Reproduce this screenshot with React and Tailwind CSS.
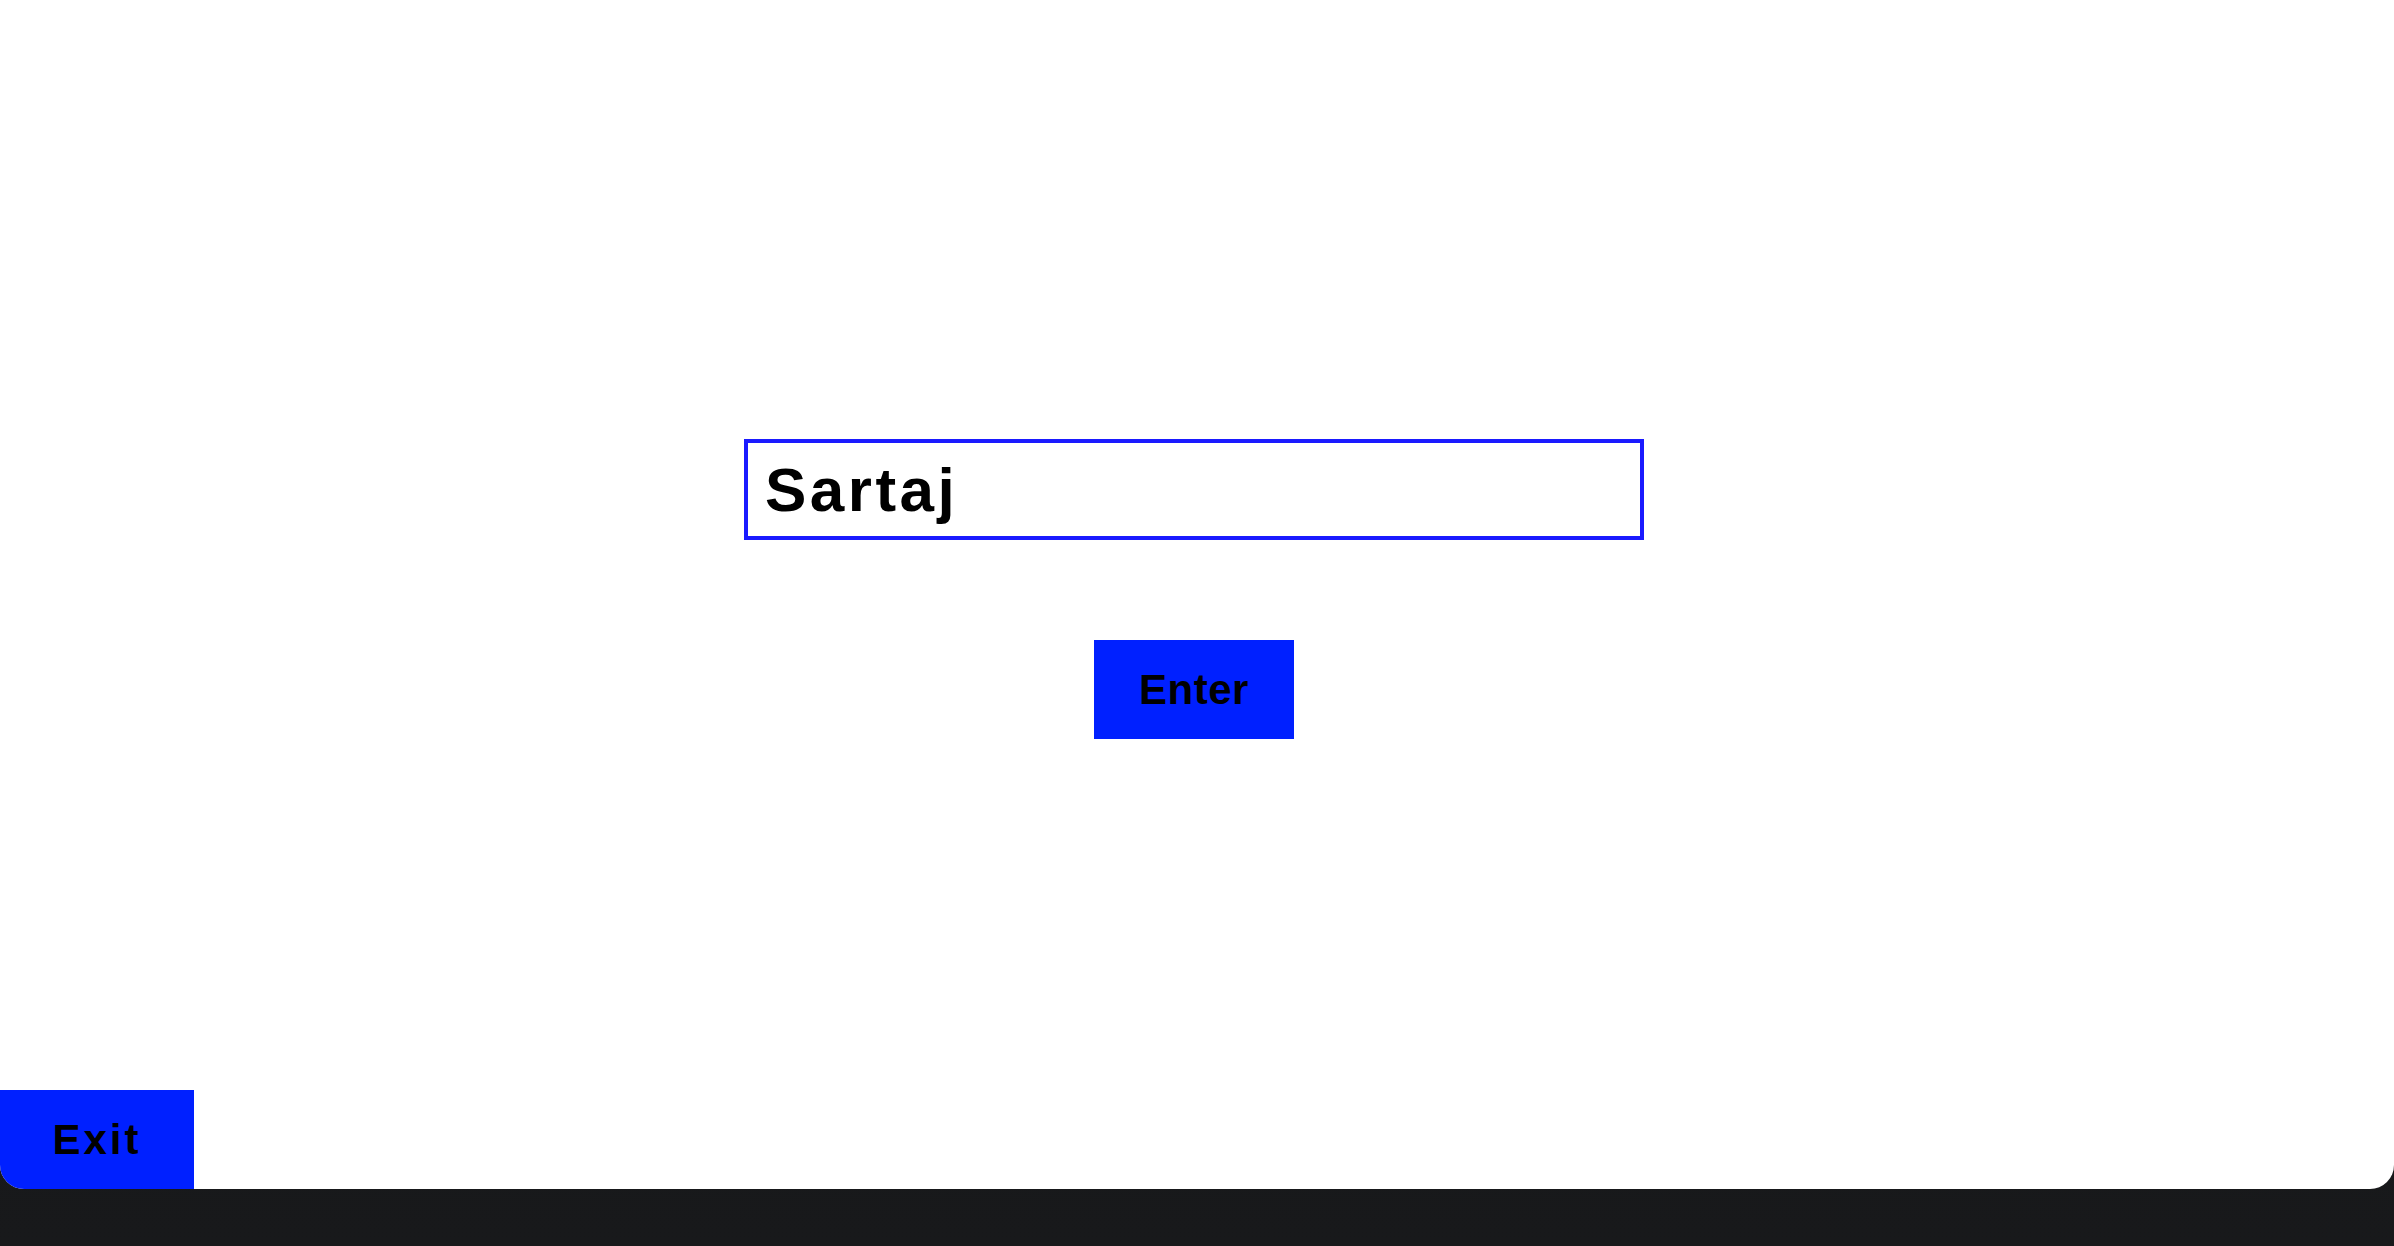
import { useState } from "react";

export default function App() {
  const [name, setName] = useState("Sartaj");

  return (
    <div
      className="min-h-[1246px] bg-gradient-to-b from-[#111214] to-[#18191b]"
      style={{ fontFamily: '"Liberation Sans", Arial, sans-serif' }}
    >
      <div className="h-[1189px] bg-white rounded-b-[24px] overflow-hidden flex flex-col">
        <div className="flex-1 flex flex-col items-center pt-[439px] pr-[6px]">
          <input
            className="w-[900px] h-[101px] border-[4px] border-[#1a1aff] outline-none pl-[17px] text-[62px] font-bold tracking-[3.5px] text-black"
            value={name}
            onChange={(e) => setName(e.target.value)}
          />
          <button className="mt-[100px] w-[200px] h-[99px] bg-[#0020ff] text-black text-[42px] font-bold tracking-[0.5px]">
            Enter
          </button>
        </div>
        <button className="w-[194px] h-[99px] bg-[#0020ff] text-black text-[42px] font-bold tracking-[3px]">
          Exit
        </button>
      </div>
    </div>
  );
}
